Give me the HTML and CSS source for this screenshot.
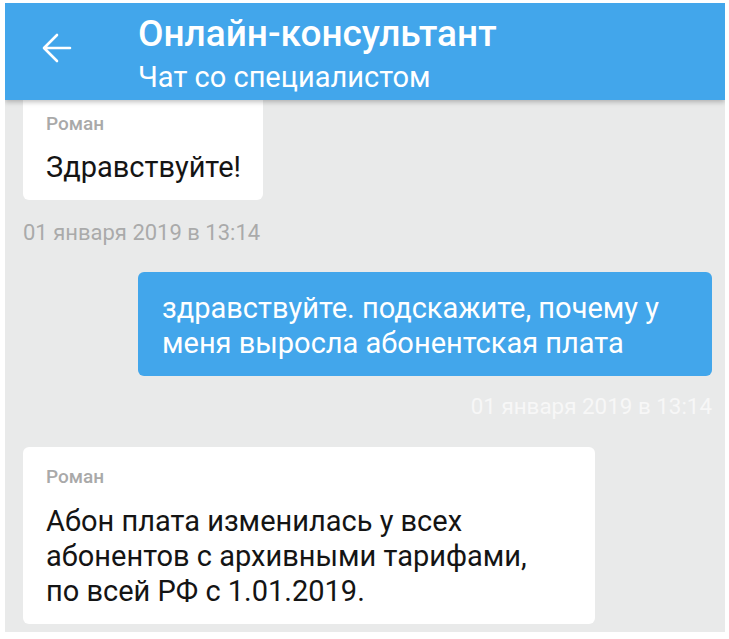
FILE: index.html
```html
<!DOCTYPE html>
<html lang="ru">
<head>
<meta charset="utf-8">
<link rel="stylesheet" href="styles.css">
</head>
<body>
<div class="screen">
  <header class="appbar">
    <svg class="back" width="30" height="30" viewBox="0 0 30 30" aria-hidden="true">
      <path d="M28 15H3M15 2L2 15l13 13" fill="none" stroke="#fff" stroke-width="2.6" stroke-linecap="round" stroke-linejoin="round"/>
    </svg>
    <div class="titles">
      <div class="title">Онлайн-консультант</div>
      <div class="subtitle">Чат со специалистом</div>
    </div>
  </header>
  <main class="chat">
    <div class="msg in first">
      <div class="bubble">
        <div class="name">Роман</div>
        <div class="text">Здравствуйте!</div>
      </div>
      <div class="time">01 января 2019 в 13:14</div>
    </div>
    <div class="msg out">
      <div class="bubble">
        <div class="text">здравствуйте. подскажите, почему у меня выросла абонентская плата</div>
      </div>
      <div class="time">01 января 2019 в 13:14</div>
    </div>
    <div class="msg in last">
      <div class="bubble">
        <div class="name">Роман</div>
        <div class="text">Абон плата изменилась у всех абонентов с архивными тарифами, по всей РФ с 1.01.2019.</div>
      </div>
    </div>
  </main>
</div>
</body>
</html>
```
FILE: styles.css
```css
html, body {
  margin: 0;
  padding: 0;
  background: #ffffff;
}
body {
  font-family: Roboto, "Noto Sans", sans-serif;
}
.screen {
  width: 720px;
  height: 629px;
  margin: 3px 0 0 5px;
  background: #e9eaea;
  overflow: hidden;
  display: flex;
  flex-direction: column;
}
.appbar {
  height: 97px;
  flex: none;
  background: #42a6eb;
  display: flex;
  align-items: flex-start;
  box-shadow: 0 2px 5px rgba(0,0,0,0.25);
  position: relative;
  z-index: 2;
}
.back {
  margin-left: 37px;
  margin-top: 30px;
  flex: none;
}
.titles {
  margin-left: 66px;
  padding-top: 10px;
  color: #fff;
}
.title {
  font-size: 37px;
  font-weight: 500;
  line-height: 42px;
}
.subtitle {
  font-size: 29px;
  line-height: 34px;
  margin-top: 5px;
}
.chat {
  flex: 1;
  padding: 0 13px 0 18px;
  display: flex;
  flex-direction: column;
}
.msg {
  display: flex;
  flex-direction: column;
}
.msg.in { align-items: flex-start; }
.msg.out { align-items: flex-end; }
.bubble {
  background: #fff;
  border-radius: 6px;
  padding: 17px 22px 15px 23px;
}
.first .bubble {
  border-radius: 0 0 6px 6px;
  padding-top: 12px;
}
.name {
  color: #a9a9a9;
  font-size: 19px;
  font-weight: 500;
  line-height: 24px;
}
.text {
  font-size: 29px;
  line-height: 35px;
  color: #141414;
}
.in .text { margin-top: 14px; }
.last .bubble {
  width: 495px;
  padding-right: 54px;
  padding-top: 18px;
}
.last .text { margin-top: 15px; }
.out .bubble {
  background: #42a6eb;
  width: 526px;
  padding: 19px 24px 15px 24px;
}
.out .text { color: #fff; }
.time {
  font-size: 22px;
  line-height: 26px;
  color: #aaaaaa;
  margin-top: 20px;
  margin-bottom: 26px;
}
.out .time {
  font-size: 22.4px;
  color: #f7f7f7;
  margin-top: 17px;
  margin-bottom: 28px;
}
```
